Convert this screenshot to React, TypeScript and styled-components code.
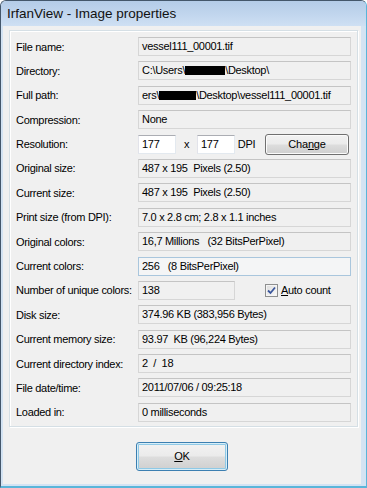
import React, { FC, ReactNode } from 'react';
import styled, { createGlobalStyle, css } from 'styled-components';

const GlobalStyle = createGlobalStyle`
  html, body {
    margin: 0;
    padding: 0;
    background: #ffffff;
  }
  body {
    font-family: "Liberation Sans", Arial, sans-serif;
  }
`;

const Window = styled.div`
  width: 367px;
  height: 488px;
  box-sizing: border-box;
  display: flex;
  flex-direction: column;
  background: #d3e3f3;
  border: 1px solid #44576b;
  border-right-color: #5ab5d9;
  border-bottom: 2px solid #5ab5d9;
  border-radius: 6px 6px 0 0;
  overflow: hidden;
`;

const TitleBar = styled.div`
  height: 25px;
  flex: none;
  display: flex;
  align-items: center;
  padding-left: 6px;
  background: linear-gradient(to bottom, #b4cce8 0%, #c3d7ee 60%, #cfe0f3 100%);
  font-size: 13.5px;
  color: #111;
`;

const Body = styled.div`
  flex: 1;
  display: flex;
  flex-direction: column;
  margin: 0 5px 2px 2px;
  padding: 4px 3px 0 6px;
  background: #f0f0f0;
  font-size: 11px;
  letter-spacing: -0.3px;
  color: #000;
`;

const Panel = styled.div`
  display: flex;
  flex-direction: column;
  gap: 5.4px;
  padding: 6px 4px 4px 6px;
  border: 1px solid #d5dfe5;
  box-shadow: inset 1px 1px 0 #ffffff, 1px 1px 0 #ffffff;
`;

const Row = styled.div`
  display: flex;
  align-items: center;
  height: 19px;
`;

const Label = styled.div`
  width: 122px;
  flex: none;
  white-space: nowrap;
`;

type FieldKind = 'static' | 'edit' | 'focus';

const Field = styled.div<{ $kind?: FieldKind; $width?: number }>`
  box-sizing: border-box;
  width: ${({ $width }) => ($width ? `${$width}px` : '213px')};
  height: 19px;
  flex: none;
  padding: 0 3px;
  line-height: 17px;
  white-space: nowrap;
  overflow: hidden;
  background: #f0f0f0;
  border: 1px solid #d6d6d6;
  border-top-color: #c4c4c4;
  ${({ $kind }) =>
    $kind === 'edit' &&
    css`
      background: #ffffff;
      border-color: #e3e9ef;
      border-top-color: #abadb3;
      border-left-color: #e2e3ea;
    `}
  ${({ $kind }) =>
    $kind === 'focus' &&
    css`
      background: #f4f5f6;
      border-color: #a9c6dd;
    `}
`;

const Redacted = styled.span<{ $width: number }>`
  display: inline-block;
  width: ${({ $width }) => $width}px;
  height: 9px;
  background: #000;
  vertical-align: -1px;
`;

const Sep = styled.span<{ $w: number }>`
  width: ${({ $w }) => $w}px;
  flex: none;
  text-align: center;
`;

const Button = styled.button<{ $default?: boolean }>`
  box-sizing: border-box;
  font-family: "Liberation Sans", Arial, sans-serif;
  font-size: 11px;
  letter-spacing: -0.2px;
  color: #000;
  border: 1px solid #707070;
  border-radius: 3px;
  background: linear-gradient(to bottom, #f2f2f2 0%, #ebebeb 48%, #dddddd 52%, #cfcfcf 100%);
  box-shadow: inset 0 0 0 1px #fbfbfb;
  padding: 0;
  cursor: default;
  ${({ $default }) =>
    $default &&
    css`
      border-color: #3c7fb1;
      box-shadow: inset 0 0 0 1px #d7eef8, inset 0 0 0 2px #8fc9e6;
    `}
`;

const ChangeButton = styled(Button)`
  width: 84px;
  height: 21px;
  margin-left: 7px;
`;

const OkButton = styled(Button)`
  width: 92px;
  height: 29px;
`;

const Footer = styled.div`
  display: flex;
  justify-content: center;
  padding: 15px 3px 0 0;
`;

const CheckLabel = styled.label`
  display: flex;
  align-items: center;
  gap: 3px;
  margin-left: 30px;
`;

const CheckBox = styled.span`
  box-sizing: border-box;
  width: 13px;
  height: 13px;
  display: flex;
  align-items: center;
  justify-content: center;
  border: 1px solid #8e8f8f;
  background: linear-gradient(135deg, #dcdcdc, #fbfbfb);
  box-shadow: inset 0 0 0 1px #f4f4f4;
`;

const InfoRow: FC<{ label: string; children: ReactNode; kind?: FieldKind }> = ({ label, children, kind }) => (
  <Row>
    <Label>{label}</Label>
    <Field $kind={kind}>{children}</Field>
  </Row>
);

const App: FC = () => {
  return (
    <>
      <GlobalStyle />
      <Window>
        <TitleBar>IrfanView - Image properties</TitleBar>
        <Body>
          <Panel>
            <InfoRow label="File name:">vessel111_00001.tif</InfoRow>
            <InfoRow label="Directory:">
              {'C:\\Users\\'}
              <Redacted $width={40} />
              {'\\Desktop\\'}
            </InfoRow>
            <InfoRow label="Full path:">
              {'ers\\'}
              <Redacted $width={37} />
              {'\\Desktop\\vessel111_00001.tif'}
            </InfoRow>
            <InfoRow label="Compression:">None</InfoRow>
            <Row>
              <Label>Resolution:</Label>
              <Field $kind="edit" $width={38}>177</Field>
              <Sep $w={21}>x</Sep>
              <Field $kind="edit" $width={38}>177</Field>
              <Sep $w={23}>DPI</Sep>
              <ChangeButton>
                Cha<u>n</u>ge
              </ChangeButton>
            </Row>
            <InfoRow label="Original size:">487 x 195&nbsp; Pixels (2.50)</InfoRow>
            <InfoRow label="Current size:">487 x 195&nbsp; Pixels (2.50)</InfoRow>
            <InfoRow label="Print size (from DPI):">7.0 x 2.8 cm; 2.8 x 1.1 inches</InfoRow>
            <InfoRow label="Original colors:">16,7 Millions&nbsp;&nbsp; (32 BitsPerPixel)</InfoRow>
            <InfoRow label="Current colors:" kind="focus">256&nbsp;&nbsp; (8 BitsPerPixel)</InfoRow>
            <Row>
              <Label>Number of unique colors:</Label>
              <Field $width={97}>138</Field>
              <CheckLabel>
                <CheckBox>
                  <svg width="9" height="9" viewBox="0 0 9 9">
                    <path d="M1 4.5 L3.5 7 L8 1.5" fill="none" stroke="#3a569c" strokeWidth="1.8" />
                  </svg>
                </CheckBox>
                <span>
                  <u>A</u>uto count
                </span>
              </CheckLabel>
            </Row>
            <InfoRow label="Disk size:">374.96 KB (383,956 Bytes)</InfoRow>
            <InfoRow label="Current memory size:">93.97&nbsp; KB (96,224 Bytes)</InfoRow>
            <InfoRow label="Current directory index:">2&nbsp; /&nbsp; 18</InfoRow>
            <InfoRow label="File date/time:">2011/07/06 / 09:25:18</InfoRow>
            <InfoRow label="Loaded in:">0 milliseconds</InfoRow>
          </Panel>
          <Footer>
            <OkButton $default>
              <u>O</u>K
            </OkButton>
          </Footer>
        </Body>
      </Window>
    </>
  );
};

export default App;
